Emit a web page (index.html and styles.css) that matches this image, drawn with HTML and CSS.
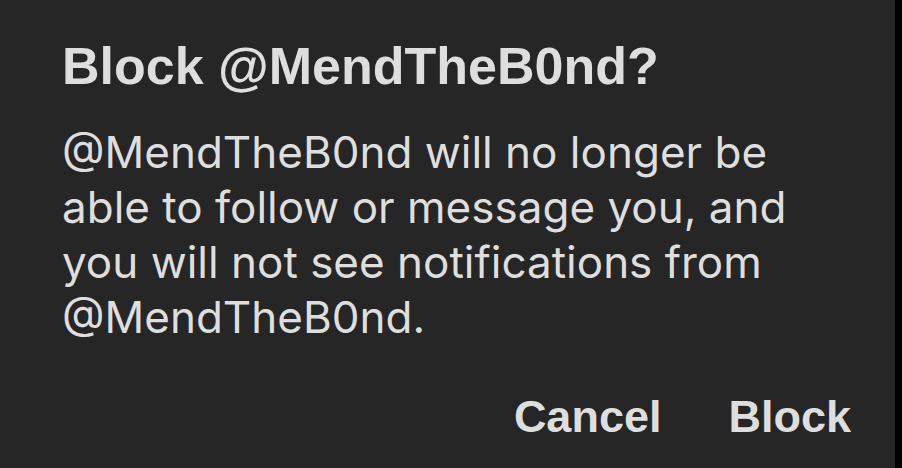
FILE: index.html
```html
<!DOCTYPE html>
<html>
<head>
<meta charset="utf-8">
<link rel="stylesheet" href="styles.css">
</head>
<body>
<div class="screen">
  <div class="dialog">
    <h1 class="title">Block @MendTheB0nd?</h1>
    <p class="message">@MendTheB0nd will no longer be able to follow or message you, and you will not see notifications from @MendTheB0nd.</p>
    <div class="actions">
      <span class="btn">Cancel</span>
      <span class="btn">Block</span>
    </div>
  </div>
  <div class="edge"></div>
</div>
</body>
</html>
```
FILE: styles.css
```css
html, body {
  margin: 0;
  padding: 0;
  background: #000;
}
.screen {
  display: flex;
  width: 902px;
  height: 468px;
}
.dialog {
  width: 895px;
  height: 468px;
  flex: none;
  background: #262626;
  color: #dedede;
  box-sizing: border-box;
  padding: 0 44px 0 62px;
  display: flex;
  flex-direction: column;
}
.edge {
  flex: 1;
  background: #000;
}
.title {
  margin: 34px 0 0 0;
  font-family: "Liberation Sans", Arial, sans-serif;
  font-weight: 700;
  font-size: 52px;
  line-height: 64px;
}
.message {
  margin: 27px 0 0 0;
  font-family: Inter, "Noto Sans", sans-serif;
  font-weight: 400;
  font-size: 44px;
  line-height: 55px;
  width: 760px;
}
.actions {
  display: flex;
  justify-content: flex-end;
  gap: 67px;
  margin-top: 44px;
}
.btn {
  font-family: "Liberation Sans", Arial, sans-serif;
  font-weight: 700;
  font-size: 45px;
  line-height: 56px;
}
```
